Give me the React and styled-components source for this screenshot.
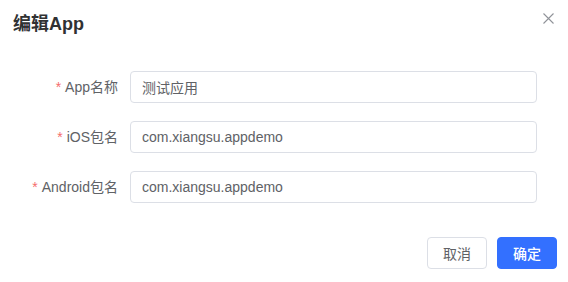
import React from 'react';
import styled, { createGlobalStyle } from 'styled-components';

const GlobalStyle = createGlobalStyle`
    html, body {
        margin: 0;
        padding: 0;
        background: #fff;
    }
    body {
        font-family: "Liberation Sans", Arial, "Noto Sans CJK SC", sans-serif;
        -webkit-font-smoothing: antialiased;
    }
`;

const DialogBlock = styled.div`
    width: 568px;
    height: 282px;
    background: #fff;
    box-sizing: border-box;
    display: flex;
    flex-direction: column;
`;

const Header = styled.div`
    display: flex;
    align-items: center;
    justify-content: space-between;
    padding: 12px 14px 0 13px;
    height: 24px;
`;

const Title = styled.span`
    font-size: 18px;
    line-height: 24px;
    font-weight: 700;
    color: #303133;
`;

const CloseButton = styled.button`
    border: none;
    background: none;
    padding: 0;
    width: 12px;
    height: 12px;
    display: flex;
    align-items: center;
    justify-content: center;
    cursor: pointer;
    margin-top: -12px;
`;

const Body = styled.div`
    padding: 35px 31px 0 20px;
`;

const FormItem = styled.div`
    display: flex;
    align-items: center;
    height: 32px;
    margin-bottom: 18px;
`;

const Label = styled.label`
    width: 110px;
    flex: none;
    box-sizing: border-box;
    padding-right: 12px;
    text-align: right;
    font-size: 14px;
    line-height: 32px;
    color: #606266;

    &::before {
        content: '*';
        color: #f56c6c;
        margin-right: 4px;
    }
`;

const Input = styled.input`
    flex: 1;
    height: 32px;
    box-sizing: border-box;
    border: 1px solid #dcdfe6;
    border-radius: 4px;
    padding: 0 11px;
    font-family: inherit;
    font-size: 14px;
    color: #606266;
    outline: none;
    background: #fff;
`;

const Footer = styled.div`
    display: flex;
    justify-content: flex-end;
    gap: 10px;
    padding: 16px 11px 0 0;
`;

const Button = styled.button`
    width: 60px;
    height: 32px;
    box-sizing: border-box;
    border-radius: 4px;
    font-family: inherit;
    font-size: 14px;
    font-weight: ${props => (props.primary ? 500 : 400)};
    cursor: pointer;
    border: 1px solid ${props => (props.primary ? '#3370ff' : '#dcdfe6')};
    background: ${props => (props.primary ? '#3370ff' : '#fff')};
    color: ${props => (props.primary ? '#fff' : '#606266')};
`;

const fields = [
    { label: 'App名称', value: '测试应用' },
    { label: 'iOS包名', value: 'com.xiangsu.appdemo' },
    { label: 'Android包名', value: 'com.xiangsu.appdemo' },
];

const App = () => {
    return (
        <>
            <GlobalStyle />
            <DialogBlock>
                <Header>
                    <Title>编辑App</Title>
                    <CloseButton aria-label="close">
                        <svg width="11" height="11" viewBox="0 0 11 11">
                            <path d="M0.5 0.5 L10.5 10.5 M10.5 0.5 L0.5 10.5" stroke="#909399" strokeWidth="1.1" fill="none" />
                        </svg>
                    </CloseButton>
                </Header>
                <Body>
                    {fields.map(f => (
                        <FormItem key={f.label}>
                            <Label>{f.label}</Label>
                            <Input defaultValue={f.value} />
                        </FormItem>
                    ))}
                </Body>
                <Footer>
                    <Button>取消</Button>
                    <Button primary>确定</Button>
                </Footer>
            </DialogBlock>
        </>
    );
};

export default App;
